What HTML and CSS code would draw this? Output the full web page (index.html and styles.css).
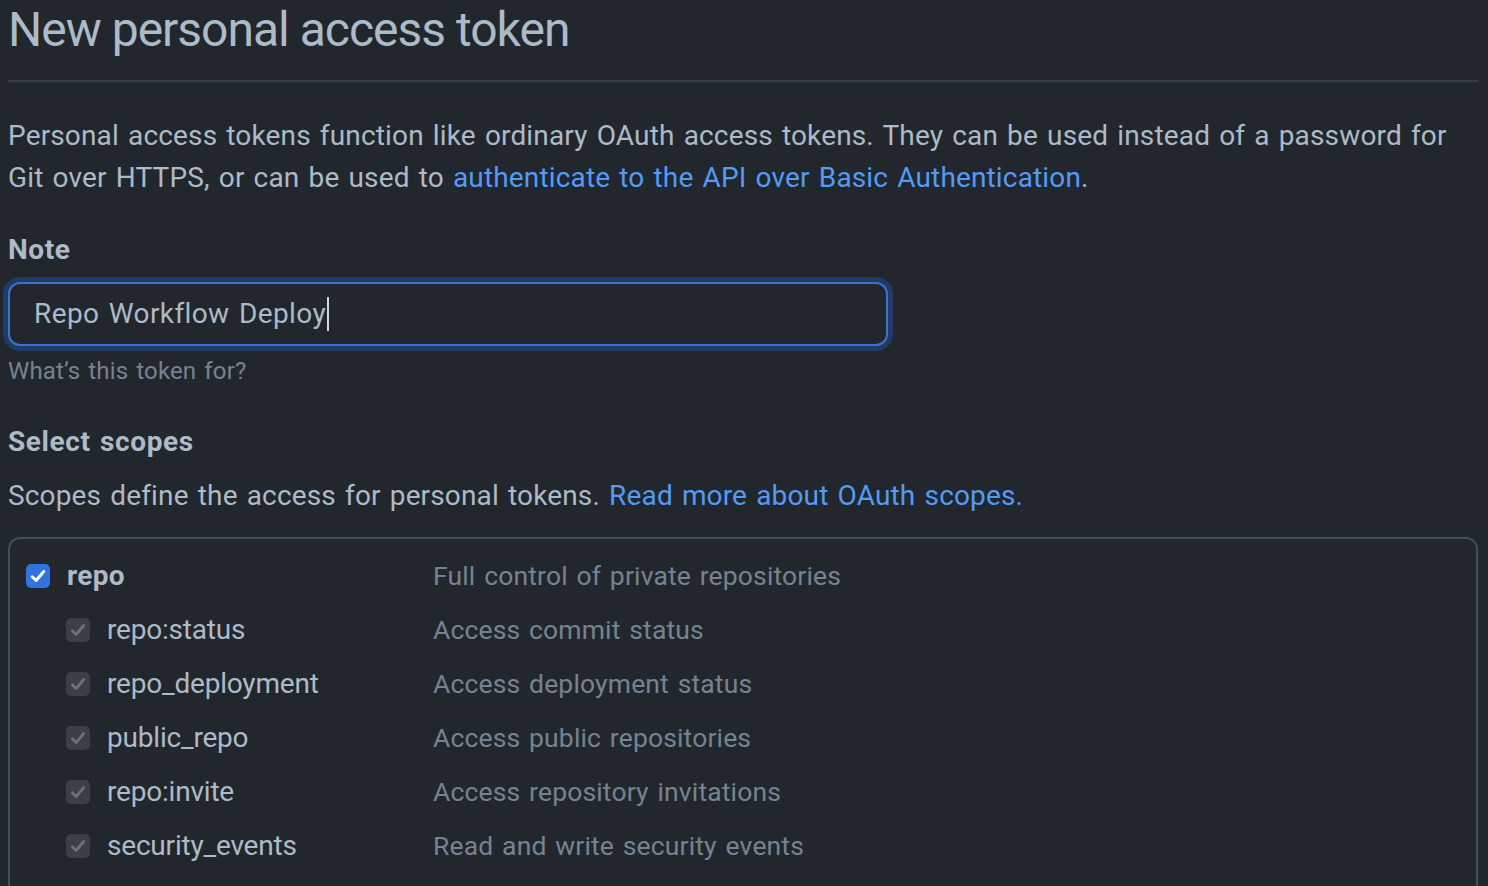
FILE: index.html
```html
<!DOCTYPE html>
<html lang="en">
<head>
<meta charset="utf-8">
<title>New personal access token</title>
<link rel="stylesheet" href="styles.css">
</head>
<body>
<main class="page">
  <div class="subhead">
    <h1 class="subhead-title">New personal access token</h1>
  </div>
  <p class="intro">Personal access tokens function like ordinary OAuth access tokens. They can be used instead of a password for Git over HTTPS, or can be used to <a href="#" class="link">authenticate to the API over Basic Authentication</a>.</p>

  <div class="form-group">
    <label class="form-label">Note</label>
    <div class="input-wrap">
      <div class="input">Repo Workflow Deploy<span class="caret"></span></div>
    </div>
    <p class="note">What’s this token for?</p>
  </div>

  <h2 class="section-title">Select scopes</h2>
  <p class="section-desc">Scopes define the access for personal tokens. <a href="#" class="link">Read more about OAuth scopes.</a></p>

  <div class="scopes">
    <div class="scope-row">
      <div class="scope-name">
        <span class="cb cb-on"><svg viewBox="0 0 16 16" width="20" height="20"><path d="M3.4 8.6 6.5 11.6 12.6 4.4" fill="none" stroke="#fff" stroke-width="2.4" stroke-linecap="round" stroke-linejoin="round"/></svg></span>
        <span class="scope-label main">repo</span>
      </div>
      <div class="scope-desc">Full control of private repositories</div>
    </div>
    <div class="scope-row sub">
      <div class="scope-name">
        <span class="cb cb-dis"><svg viewBox="0 0 16 16" width="20" height="20"><path d="M3.4 8.6 6.5 11.6 12.6 4.4" fill="none" stroke="#6c7179" stroke-width="2.2" stroke-linecap="round" stroke-linejoin="round"/></svg></span>
        <span class="scope-label">repo:status</span>
      </div>
      <div class="scope-desc">Access commit status</div>
    </div>
    <div class="scope-row sub">
      <div class="scope-name">
        <span class="cb cb-dis"><svg viewBox="0 0 16 16" width="20" height="20"><path d="M3.4 8.6 6.5 11.6 12.6 4.4" fill="none" stroke="#6c7179" stroke-width="2.2" stroke-linecap="round" stroke-linejoin="round"/></svg></span>
        <span class="scope-label">repo_deployment</span>
      </div>
      <div class="scope-desc">Access deployment status</div>
    </div>
    <div class="scope-row sub">
      <div class="scope-name">
        <span class="cb cb-dis"><svg viewBox="0 0 16 16" width="20" height="20"><path d="M3.4 8.6 6.5 11.6 12.6 4.4" fill="none" stroke="#6c7179" stroke-width="2.2" stroke-linecap="round" stroke-linejoin="round"/></svg></span>
        <span class="scope-label">public_repo</span>
      </div>
      <div class="scope-desc">Access public repositories</div>
    </div>
    <div class="scope-row sub">
      <div class="scope-name">
        <span class="cb cb-dis"><svg viewBox="0 0 16 16" width="20" height="20"><path d="M3.4 8.6 6.5 11.6 12.6 4.4" fill="none" stroke="#6c7179" stroke-width="2.2" stroke-linecap="round" stroke-linejoin="round"/></svg></span>
        <span class="scope-label">repo:invite</span>
      </div>
      <div class="scope-desc">Access repository invitations</div>
    </div>
    <div class="scope-row sub">
      <div class="scope-name">
        <span class="cb cb-dis"><svg viewBox="0 0 16 16" width="20" height="20"><path d="M3.4 8.6 6.5 11.6 12.6 4.4" fill="none" stroke="#6c7179" stroke-width="2.2" stroke-linecap="round" stroke-linejoin="round"/></svg></span>
        <span class="scope-label">security_events</span>
      </div>
      <div class="scope-desc">Read and write security events</div>
    </div>
  </div>
</main>
</body>
</html>
```

FILE: styles.css
```css
* { box-sizing: border-box; }

html, body {
  margin: 0;
  padding: 0;
  background: #22272e;
  height: 886px;
  overflow: hidden;
}

body {
  font-family: Roboto, "Noto Sans", "Liberation Sans", sans-serif;
  color: #adbac7;
  font-size: 28px;
  line-height: 42px;
  letter-spacing: 0.15px;
  word-spacing: 2px;
}

.page {
  width: 1478px;
  padding-left: 8px;
}

.subhead {
  padding-bottom: 20px;
  border-bottom: 2px solid #373e47;
}

.subhead-title {
  margin: 0;
  font-size: 48px;
  font-weight: 400;
  line-height: 60px;
  letter-spacing: -1px;
  word-spacing: 0;
  color: #adbac7;
}

.intro {
  margin: 33px 0 0;
}

.link {
  color: #539bf5;
  text-decoration: none;
}

.form-group {
  margin-top: 30px;
}

.form-label {
  display: block;
  font-weight: 700;
  letter-spacing: 0.6px;
  margin-bottom: 11px;
}

.input-wrap {
  width: 880px;
}

.input {
  height: 64px;
  border: 2px solid #3f72cf;
  border-radius: 12px;
  box-shadow: 0 0 0 5px #223a66;
  padding: 0 24px;
  display: flex;
  align-items: center;
  font-size: 28px;
  letter-spacing: 0.4px;
  color: #adbac7;
  background: #22272e;
  white-space: pre;
}

.caret {
  display: inline-block;
  width: 2px;
  height: 34px;
  background: #cdd9e5;
  margin-left: 1px;
}

.note {
  margin: 7px 0 0;
  font-size: 24px;
  line-height: 36px;
  color: #768390;
}

.section-title {
  margin: 32px 0 0;
  font-size: 28px;
  line-height: 42px;
  font-weight: 700;
  letter-spacing: 0.6px;
}

.section-desc {
  margin: 12px 0 0;
}

.scopes {
  margin-top: 20px;
  border: 2px solid #444c56;
  border-radius: 12px;
  padding: 10px 16px 10px;
  height: 360px;
}

.scope-row {
  display: flex;
  align-items: center;
  height: 54px;
}

.scope-name {
  width: 407px;
  display: flex;
  align-items: center;
  gap: 17px;
}

.scope-row.sub .scope-name {
  padding-left: 40px;
}

.cb {
  width: 24px;
  height: 24px;
  border-radius: 5px;
  display: flex;
  align-items: center;
  justify-content: center;
  flex: none;
}

.cb-on {
  background: #3174e0;
}

.cb-dis {
  background: #3b3f46;
}

.scope-label {
  color: #adbac7;
  letter-spacing: -0.2px;
}

.scope-label.main {
  font-weight: 700;
  letter-spacing: 0.3px;
}

.scope-desc {
  color: #768390;
  font-size: 26.5px;
}
```
